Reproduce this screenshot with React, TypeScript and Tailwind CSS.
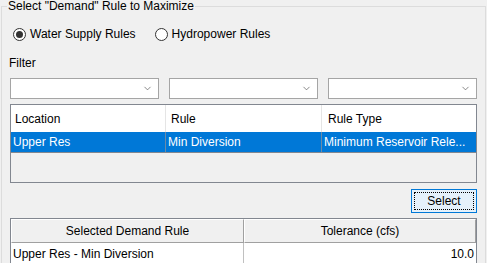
import { ChevronDown } from "lucide-react";

const filters = [0, 1, 2];

function Radio({ checked, label }: { checked: boolean; label: string }) {
  return (
    <label className="flex items-center gap-[4px]">
      <span className="flex h-[13px] w-[13px] items-center justify-center rounded-full border border-[#333333] bg-white">
        {checked && <span className="h-[7px] w-[7px] rounded-full bg-[#333333]" />}
      </span>
      <span>{label}</span>
    </label>
  );
}

export default function App() {
  return (
    <div className="h-[263px] w-[487px] overflow-hidden bg-[#f0f0f0] text-[12px] text-black [font-family:'Liberation_Sans',Arial,sans-serif]">
      <fieldset className="ml-[1px] h-[300px] w-[485px] border border-[#dcdcdc] px-[8px] pt-0">
        <legend className="ml-[-3px] px-[1px] leading-[12px]">Select "Demand" Rule to Maximize</legend>

        {/* rule kind */}
        <div className="mt-[15px] ml-[3px] flex h-[14px] items-center gap-[19px] leading-[14px]">
          <Radio checked label="Water Supply Rules" />
          <Radio checked={false} label="Hydropower Rules" />
        </div>

        <div className="mt-[15px] ml-[-1px] leading-[14px]">Filter</div>

        <div className="mt-[8px] grid grid-cols-3 gap-[10px]">
          {filters.map((f) => (
            <div
              key={f}
              className="flex h-[21px] items-center justify-end border border-[#a5a5a5] bg-white pr-[5px]"
            >
              <ChevronDown className="h-[11px] w-[11px] text-[#555555]" strokeWidth={1.5} />
            </div>
          ))}
        </div>

        {/* rules table */}
        <div className="mt-[5px] h-[79px] border border-[#828790] bg-[#f0f0f0]">
          <div className="grid h-[27px] grid-cols-[155px_156px_1fr] bg-white">
            <div className="flex items-center border-r border-[#e5e5e5] pl-[4px]">Location</div>
            <div className="flex items-center border-r border-[#e5e5e5] pl-[5px]">Rule</div>
            <div className="flex items-center pl-[6px]">Rule Type</div>
          </div>
          <div className="grid h-[21px] grid-cols-[155px_156px_1fr] border-b border-[#828790] bg-[#0078d7] text-white">
            <div className="flex items-center border-r border-[#6a8aa8] pl-[2px]">Upper Res</div>
            <div className="flex items-center border-r border-[#6a8aa8] pl-[2px]">Min Diversion</div>
            <div className="flex items-center pl-[2px]">Minimum Reservoir Rele...</div>
          </div>
        </div>

        <div className="mt-[6px] flex justify-end">
          <button className="flex h-[24px] w-[66px] items-center justify-center border border-[#0078d7] bg-[#e5f1fb] p-[2px]">
            <span className="flex h-full w-full items-center justify-center border border-dotted border-black">
              Select
            </span>
          </button>
        </div>

        {/* selected rule */}
        <div className="mt-[5px] border border-[#828790] bg-white">
          <div className="grid h-[24px] grid-cols-[233px_1fr] bg-[#f0f0f0]">
            <div className="flex items-center justify-center border-t border-l border-white border-r border-b border-r-[#a0a0a0] border-b-[#a0a0a0]">
              Selected Demand Rule
            </div>
            <div className="flex items-center justify-center border-t border-l border-white border-r border-b border-r-[#a0a0a0] border-b-[#a0a0a0]">
              Tolerance (cfs)
            </div>
          </div>
          <div className="grid h-[21px] grid-cols-[233px_1fr]">
            <div className="flex items-center border-r border-[#c0c0c0] pl-[2px]">Upper Res - Min Diversion</div>
            <div className="flex items-center justify-end pr-[2px]">10.0</div>
          </div>
        </div>
      </fieldset>
    </div>
  );
}
